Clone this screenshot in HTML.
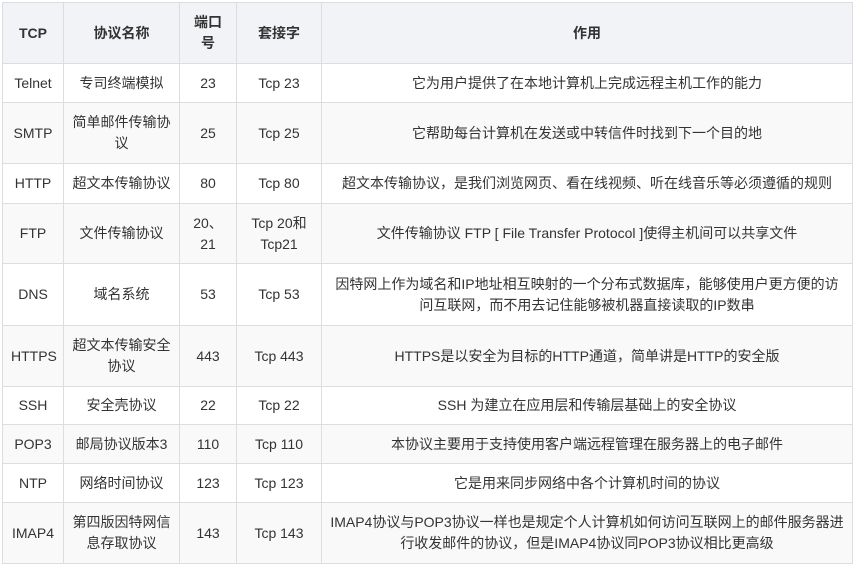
<!DOCTYPE html>
<html><head><meta charset="utf-8"><style>
html,body{margin:0;padding:0;background:#fff;width:856px;height:568px;overflow:hidden}
table{position:absolute;left:2px;top:2px;width:851px;border-collapse:collapse;table-layout:fixed;font-family:"Liberation Sans","Noto Sans CJK SC",sans-serif;font-size:14px;color:#333}
td,th{border:1px solid #ddd;text-align:center;padding:0 8px;line-height:21px;box-sizing:border-box}
th{background:#f1f3f6;font-weight:bold;font-size:14px}
tr:nth-child(odd) td{background:#f9f9f9}
</style></head><body>
<table>
<colgroup><col style="width:61px"><col style="width:116px"><col style="width:57px"><col style="width:85px"><col></colgroup>
<tr style="height:61px"><th>TCP</th><th>协议名称</th><th>端口号</th><th>套接字</th><th>作用</th></tr>
<tr style="height:39px"><td>Telnet</td><td>专司终端模拟</td><td>23</td><td>Tcp 23</td><td>它为用户提供了在本地计算机上完成远程主机工作的能力</td></tr>
<tr style="height:61px"><td>SMTP</td><td>简单邮件传输协议</td><td>25</td><td>Tcp 25</td><td>它帮助每台计算机在发送或中转信件时找到下一个目的地</td></tr>
<tr style="height:40px"><td>HTTP</td><td>超文本传输协议</td><td>80</td><td>Tcp 80</td><td>超文本传输协议，是我们浏览网页、看在线视频、听在线音乐等必须遵循的规则</td></tr>
<tr style="height:60px"><td>FTP</td><td>文件传输协议</td><td>20、21</td><td>Tcp 20和Tcp21</td><td>文件传输协议 FTP [ File Transfer Protocol ]使得主机间可以共享文件</td></tr>
<tr style="height:62px"><td>DNS</td><td>域名系统</td><td>53</td><td>Tcp 53</td><td>因特网上作为域名和IP地址相互映射的一个分布式数据库，能够使用户更方便的访问互联网，而不用去记住能够被机器直接读取的IP数串</td></tr>
<tr style="height:61px"><td>HTTPS</td><td>超文本传输安全协议</td><td>443</td><td>Tcp 443</td><td>HTTPS是以安全为目标的HTTP通道，简单讲是HTTP的安全版</td></tr>
<tr style="height:38px"><td>SSH</td><td>安全壳协议</td><td>22</td><td>Tcp 22</td><td>SSH 为建立在应用层和传输层基础上的安全协议</td></tr>
<tr style="height:39px"><td>POP3</td><td>邮局协议版本3</td><td>110</td><td>Tcp 110</td><td>本协议主要用于支持使用客户端远程管理在服务器上的电子邮件</td></tr>
<tr style="height:39px"><td>NTP</td><td>网络时间协议</td><td>123</td><td>Tcp 123</td><td>它是用来同步网络中各个计算机时间的协议</td></tr>
<tr style="height:61px"><td>IMAP4</td><td>第四版因特网信息存取协议</td><td>143</td><td>Tcp 143</td><td>IMAP4协议与POP3协议一样也是规定个人计算机如何访问互联网上的邮件服务器进行收发邮件的协议，但是IMAP4协议同POP3协议相比更高级</td></tr>
</table>
</body></html>
